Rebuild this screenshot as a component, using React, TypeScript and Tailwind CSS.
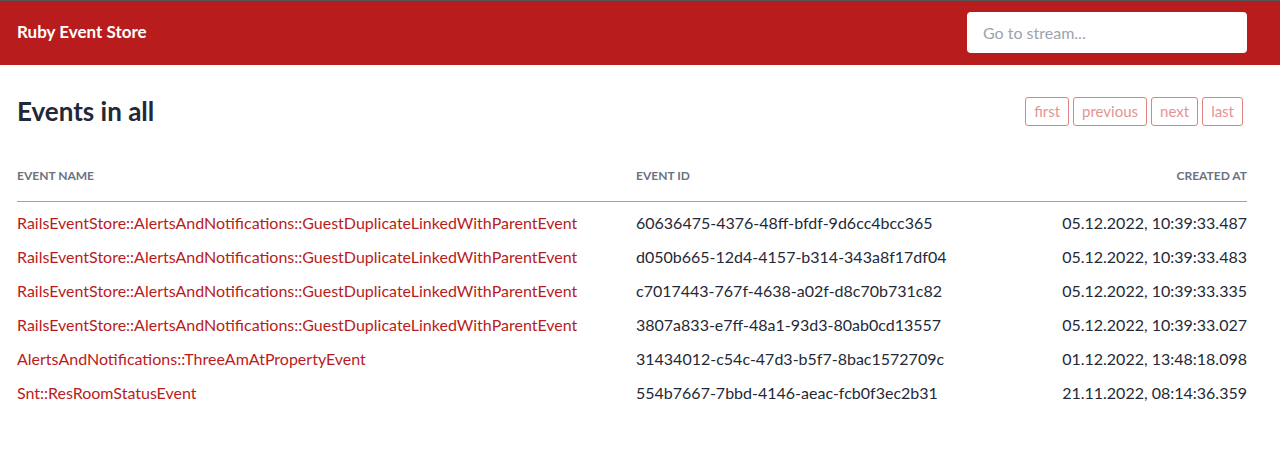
import React from "react";

const events = [
    { name: "RailsEventStore::AlertsAndNotifications::GuestDuplicateLinkedWithParentEvent", id: "60636475-4376-48ff-bfdf-9d6cc4bcc365", at: "05.12.2022, 10:39:33.487" },
    { name: "RailsEventStore::AlertsAndNotifications::GuestDuplicateLinkedWithParentEvent", id: "d050b665-12d4-4157-b314-343a8f17df04", at: "05.12.2022, 10:39:33.483" },
    { name: "RailsEventStore::AlertsAndNotifications::GuestDuplicateLinkedWithParentEvent", id: "c7017443-767f-4638-a02f-d8c70b731c82", at: "05.12.2022, 10:39:33.335" },
    { name: "RailsEventStore::AlertsAndNotifications::GuestDuplicateLinkedWithParentEvent", id: "3807a833-e7ff-48a1-93d3-80ab0cd13557", at: "05.12.2022, 10:39:33.027" },
    { name: "AlertsAndNotifications::ThreeAmAtPropertyEvent", id: "31434012-c54c-47d3-b5f7-8bac1572709c", at: "01.12.2022, 13:48:18.098" },
    { name: "Snt::ResRoomStatusEvent", id: "554b7667-7bbd-4146-aeac-fcb0f3ec2b31", at: "21.11.2022, 08:14:36.359" },
];

const pages = ["first", "previous", "next", "last"];

const App: React.FC = () => {
    return (
        <div className="min-h-screen bg-white font-['Lato','Liberation_Sans',sans-serif]">
            <header className="border-t border-[#555555] bg-[#b91c1c] h-[65px] flex items-center justify-between pl-[17px] pr-[33px]">
                <span className="text-white font-bold text-[17px] leading-6 -mt-0.5">Ruby Event Store</span>
                <input
                    type="text"
                    placeholder="Go to stream..."
                    className="w-[280px] h-[41px] -mt-0.5 rounded-[4px] bg-white px-4 text-base text-gray-900 placeholder:text-[#9ca3af] outline-none"
                />
            </header>

            <main className="pl-[17px] pr-[33px]">
                <div className="flex items-center justify-between mt-8 h-[29px]">
                    <h1 className="text-[26px] font-bold text-[#1f2937]">Events in all</h1>
                    <div className="flex gap-1 pr-1">
                        {pages.map((p) => (
                            <button
                                key={p}
                                className="h-[29px] px-2 text-[15px] rounded-[3px] border border-[#e08282] text-[#e39494] bg-white"
                            >
                                {p}
                            </button>
                        ))}
                    </div>
                </div>

                <table className="w-full mt-[26px] table-fixed border-collapse">
                    <thead>
                        <tr className="border-b border-[#9ca3af]">
                            <th className="w-[619px] text-left text-xs font-bold uppercase text-[#6b7280] pt-4 pb-[17px]">Event name</th>
                            <th className="text-left text-xs font-bold uppercase text-[#6b7280] pt-4 pb-[17px]">Event id</th>
                            <th className="w-[300px] text-right text-xs font-bold uppercase text-[#6b7280] pt-4 pb-[17px]">Created at</th>
                        </tr>
                    </thead>
                    <tbody>
                        {events.map((e) => (
                            <tr key={e.id}>
                                <td className="pt-[9px] pb-px text-base text-[#b91c1c] whitespace-nowrap">{e.name}</td>
                                <td className="pt-[9px] pb-px text-base text-[#1f2937] whitespace-nowrap">{e.id}</td>
                                <td className="pt-[9px] pb-px text-base text-[#1f2937] text-right whitespace-nowrap">{e.at}</td>
                            </tr>
                        ))}
                    </tbody>
                </table>
            </main>
        </div>
    );
};

export default App;
